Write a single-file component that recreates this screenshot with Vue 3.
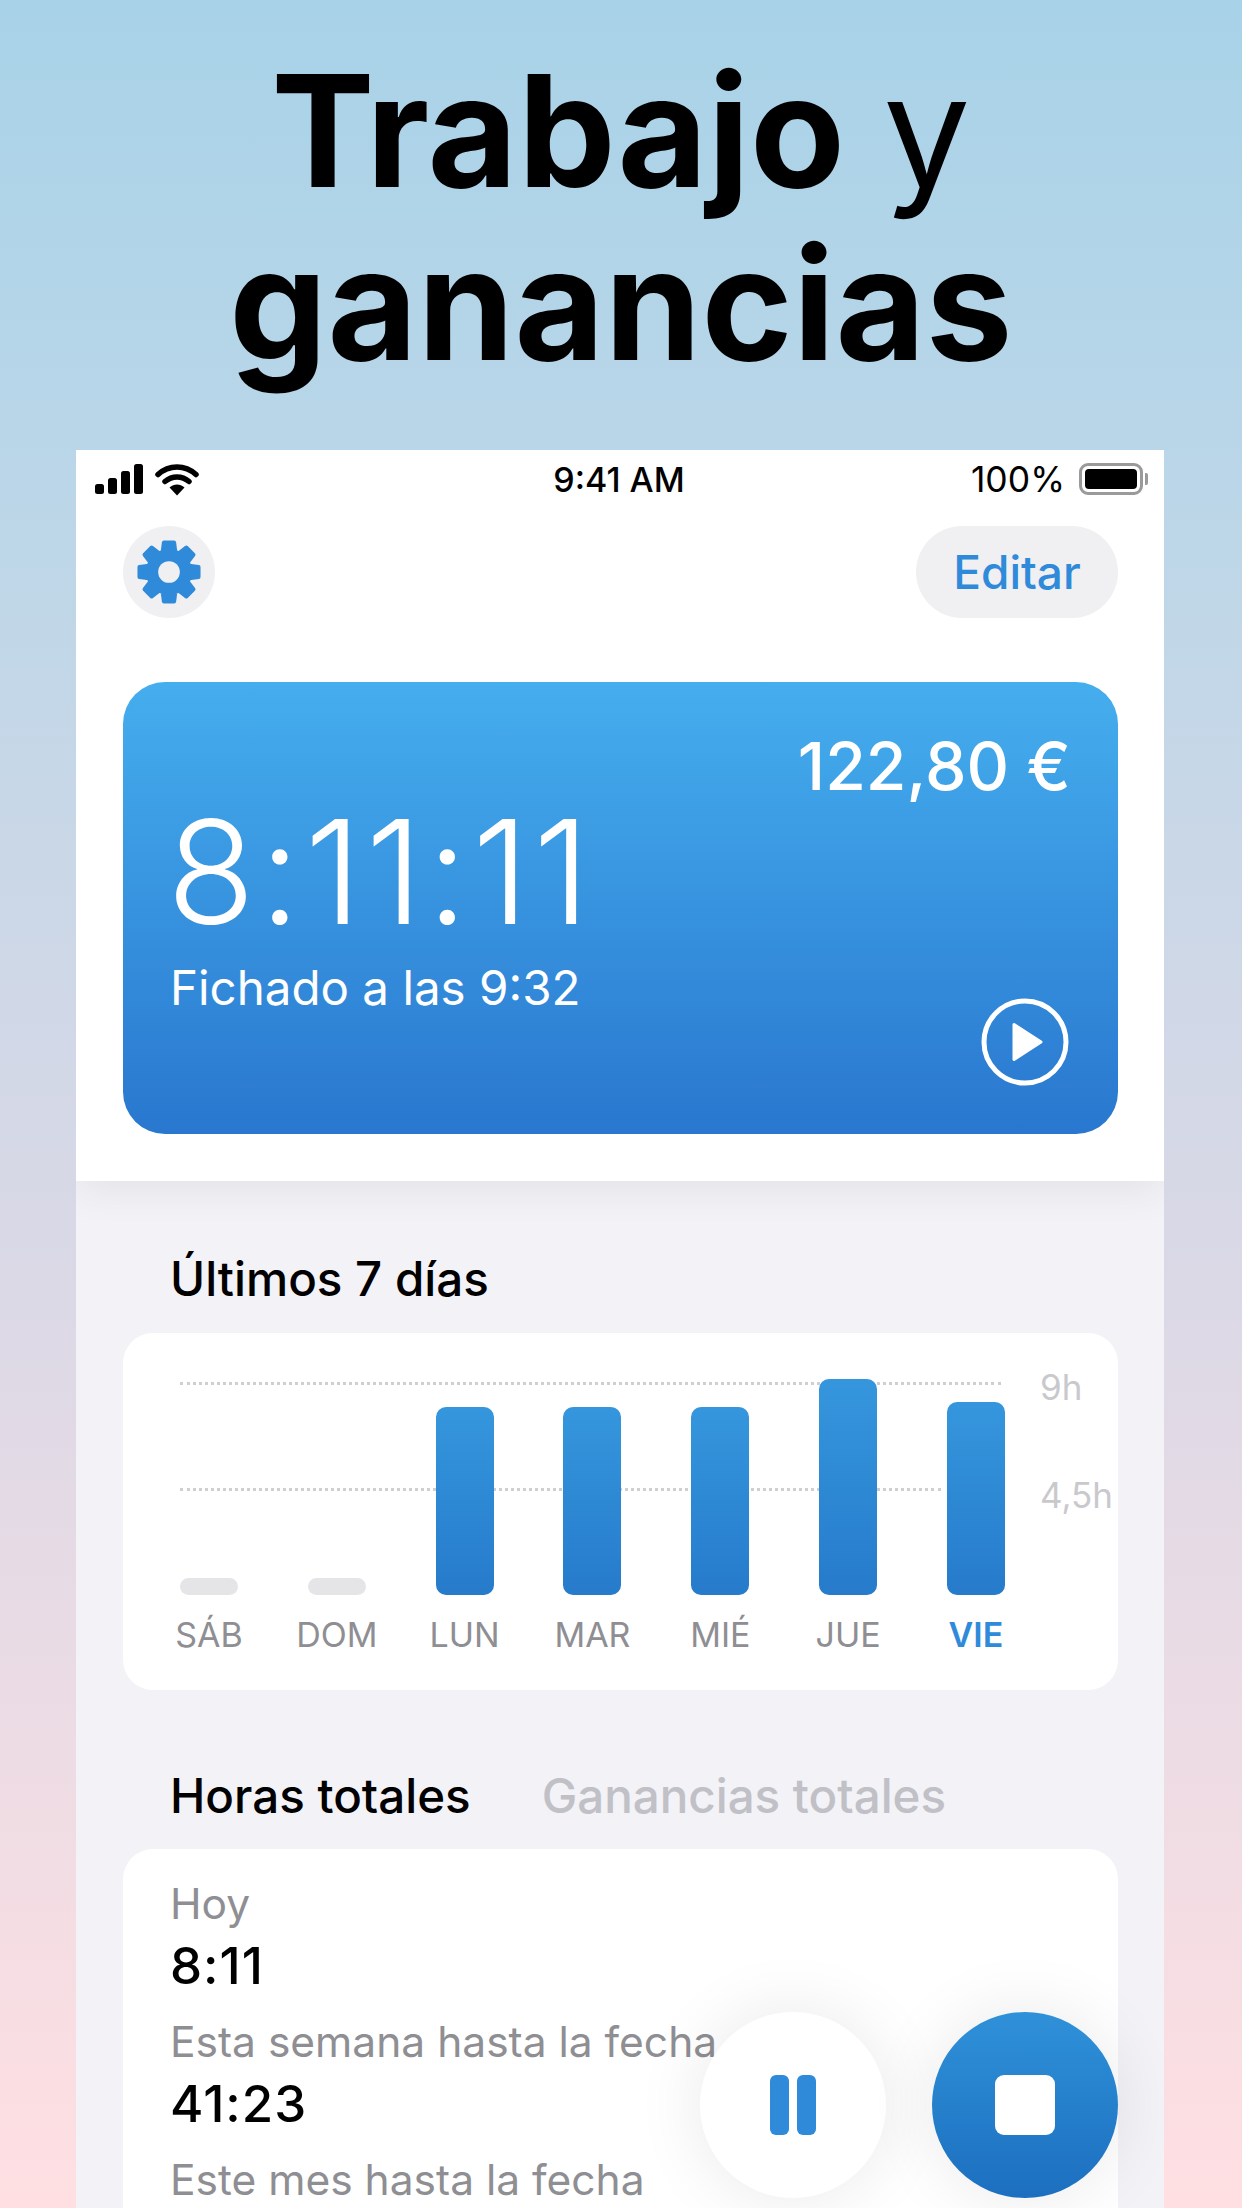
<template>
  <div class="page">
    <h1 class="title"><b>Trabajo</b> y<br /><b>ganancias</b></h1>

    <div class="phone">
      <header class="top">
        <div class="status">
          <div class="status-left">
            <svg width="48" height="30" viewBox="0 0 48 30" aria-hidden="true">
              <rect x="0" y="20" width="9" height="10" rx="2.5" />
              <rect x="13" y="14" width="9" height="16" rx="2.5" />
              <rect x="26" y="7" width="9" height="23" rx="2.5" />
              <rect x="39" y="0" width="9" height="30" rx="2.5" />
            </svg>
            <svg width="44" height="33" viewBox="0 0 44 33" aria-hidden="true">
              <path d="M3 11.5C14 1.5 30 1.5 41 11.5" class="wifi-arc" />
              <path d="M10 18.5C17 12.5 27 12.5 34 18.5" class="wifi-arc" />
              <path d="M14.5 24.5C19 20.5 25 20.5 29.500 24.500L22 32.500Z" class="wifi-tip" />
            </svg>
          </div>
          <span class="clock">9:41 AM</span>
          <div class="status-right">
            <span>100%</span>
            <div class="battery"><i></i></div>
          </div>
        </div>

        <div class="toolbar">
          <button class="gear-btn" aria-label="Ajustes">
            <svg width="66" height="66" viewBox="-32 -32 64 64" aria-hidden="true">
              <path :d="gearPath" fill="#2f8bda" stroke="#2f8bda" stroke-width="4" stroke-linejoin="round" fill-rule="evenodd" />
              <circle r="10.500" fill="#f0f0f3" />
            </svg>
          </button>
          <button class="edit-btn">Editar</button>
        </div>

        <section class="hero">
          <div class="amount">122,80 €</div>
          <div class="timer">8:11:11</div>
          <div class="clocked">Fichado a las 9:32</div>
          <svg class="play" width="88" height="88" viewBox="0 0 88 88" aria-hidden="true">
            <circle cx="44" cy="44" r="41" fill="none" stroke="#fff" stroke-width="5" />
            <path d="M33 26.500L60 44L33 61.500Z" fill="#fff" stroke="#fff" stroke-width="3" stroke-linejoin="round" />
          </svg>
        </section>
      </header>

      <main class="content">
        <h2 class="heading">Últimos 7 días</h2>
        <section class="card chart">
          <div class="grid-line grid-line--top"></div>
          <div class="grid-line grid-line--mid"></div>
          <span class="axis axis--top">9h</span>
          <span class="axis axis--mid">4,5h</span>
          <div class="days">
            <div v-for="d in days" :key="d.name" class="day">
              <div class="bar-slot">
                <div class="bar" :class="{ 'bar--empty': d.h < 20 }" :style="{ height: d.h + 'px' }"></div>
              </div>
              <span class="day-name" :class="{ 'day-name--now': d.now }">{{ d.name }}</span>
            </div>
          </div>
        </section>

        <div class="tabs">
          <span class="tab tab--on">Horas totales</span>
          <span class="tab">Ganancias totales</span>
        </div>
        <section class="card totals">
          <div v-for="t in totals" :key="t.label" class="total">
            <div class="total-label">{{ t.label }}</div>
            <div v-if="t.value" class="total-value">{{ t.value }}</div>
          </div>
        </section>
      </main>

      <div class="fabs">
        <button class="fab fab--pause" aria-label="Pausa"><i></i><i></i></button>
        <button class="fab fab--stop" aria-label="Parar"><i></i></button>
      </div>
    </div>
  </div>
</template>

<script setup>
const days = [
  { name: 'SÁB', h: 17 },
  { name: 'DOM', h: 17 },
  { name: 'LUN', h: 188 },
  { name: 'MAR', h: 188 },
  { name: 'MIÉ', h: 188 },
  { name: 'JUE', h: 216 },
  { name: 'VIE', h: 193, now: true },
]

const totals = [
  { label: 'Hoy', value: '8:11' },
  { label: 'Esta semana hasta la fecha', value: '41:23' },
  { label: 'Este mes hasta la fecha' },
]

// rueda dentada de 8 dientes
const pt = (r, a) => `${(r * Math.cos(a)).toFixed(2)} ${(r * Math.sin(a)).toFixed(2)}`
const gearPath = (() => {
  let d = ''
  for (let i = 0; i < 8; i++) {
    const c = (i * Math.PI) / 4 - Math.PI / 2
    d += `${i ? 'L' : 'M'}${pt(20.5, c - 0.3)}L${pt(29, c - 0.17)}L${pt(29, c + 0.17)}L${pt(20.5, c + 0.3)}`
  }
  return d + 'Z'
})()
</script>

<style>
html, body { margin: 0; }
</style>

<style scoped>
.page {
  width: 1242px;
  height: 2208px;
  overflow: hidden;
  display: flex;
  flex-direction: column;
  background: linear-gradient(180deg, #a8d2e8 0%, #b9d6e8 20%, #d8d8e6 55%, #ffdfe2 100%);
  font-family: Inter, "Noto Sans", sans-serif;
}
.title {
  height: 450px;
  margin: 0;
  padding-top: 44px;
  box-sizing: border-box;
  text-align: center;
  font-size: 155px;
  line-height: 173px;
  font-weight: 400;
  color: #000;
  letter-spacing: 0.3px;
  word-spacing: -6px;
}
.title b { font-weight: 700; }

.phone {
  position: relative;
  width: 1088px;
  margin-left: 76px;
  flex: 1;
  overflow: hidden;
  background: #f2f2f7;
}
.top {
  position: relative;
  background: #fff;
  height: 731px;
  padding: 0 46px 0 47px;
  box-sizing: border-box;
  box-shadow: 0 8px 40px rgba(0, 0, 0, 0.07);
}
.status {
  height: 58px;
  margin: 0 -25px 18px -28px;
  display: flex;
  align-items: center;
  justify-content: space-between;
  font-size: 35.5px;
  color: #000;
  position: relative;
}
.status-left { display: flex; align-items: center; gap: 12px; width: 200px; }
.wifi-arc { fill: none; stroke: #000; stroke-width: 5.5; stroke-linecap: round; }
.wifi-tip { fill: #000; }
.clock { font-weight: 500; font-size: 34px; }
.status-right { display: flex; align-items: center; justify-content: flex-end; gap: 14px; width: 200px; }
.battery {
  position: relative;
  width: 64px;
  height: 32px;
  box-sizing: border-box;
  border: 3px solid #9a9a9a;
  border-radius: 9px;
  padding: 3px;
}
.battery i { display: block; height: 100%; background: #000; border-radius: 4px; }
.battery::after {
  content: '';
  position: absolute;
  right: -8px;
  top: 7px;
  width: 3px;
  height: 12px;
  background: #9a9a9a;
  border-radius: 0 2px 2px 0;
}
.toolbar {
  display: flex;
  justify-content: space-between;
  margin-bottom: 64px;
}
button { border: 0; padding: 0; font-family: inherit; }
.gear-btn {
  width: 92px;
  height: 92px;
  border-radius: 50%;
  background: #f0f0f3;
  display: flex;
  align-items: center;
  justify-content: center;
}
.edit-btn {
  width: 202px;
  height: 92px;
  border-radius: 46px;
  background: #f0f0f3;
  color: #2f8bda;
  font-size: 46px;
  font-weight: 450;
}
.hero {
  position: relative;
  height: 452px;
  border-radius: 42px;
  background: linear-gradient(180deg, #45aeee 0%, #2977cf 100%);
  color: #fff;
  padding: 0 47px 0 47px;
  box-sizing: border-box;
  display: flex;
  flex-direction: column;
}
.amount {
  align-self: flex-end;
  margin-top: 47px;
  font-size: 66px;
  line-height: 75px;
  font-weight: 500;
}
.timer {
  margin: -19px 0 0 -3px;
  font-size: 144px;
  line-height: 174px;
  font-weight: 320;
  letter-spacing: 4.5px;
}
.clocked {
  font-size: 47.5px;
  line-height: 56px;
  margin-top: 1px;
}
.play { position: absolute; right: 49px; bottom: 48px; }

.content { padding: 0 46px 0 47px; }
.heading {
  margin: 71px 0 0 47px;
  font-size: 47.5px;
  line-height: 54px;
  font-weight: 500;
  color: #000;
}
.card { background: #fff; border-radius: 30px; }
.chart {
  position: relative;
  margin-top: 27px;
  height: 357px;
  box-sizing: border-box;
  padding: 46px 113px 0 57px;
}
.grid-line {
  position: absolute;
  left: 57px;
  border-top: 3px dotted #cfcfd2;
}
.grid-line--top { top: 49px; width: 821px; }
.grid-line--mid { top: 155px; width: 761px; }
.axis {
  position: absolute;
  left: 917px;
  font-size: 35px;
  line-height: 40px;
  color: #c9c9cd;
}
.axis--top { top: 34px; }
.axis--mid { top: 142px; }
.days { position: relative; display: flex; justify-content: space-between; }
.day { width: 58px; display: flex; flex-direction: column; align-items: center; }
.bar-slot { height: 216px; display: flex; align-items: flex-end; }
.bar {
  width: 58px;
  border-radius: 10px;
  background: linear-gradient(180deg, #3596dd 0%, #267bcb 100%);
}
.bar--empty { background: #e5e5e7; }
.day-name {
  margin-top: 20px;
  font-size: 34px;
  line-height: 39px;
  color: #8e8e93;
  white-space: nowrap;
}
.day-name--now { color: #2f8bda; font-weight: 600; }

.tabs {
  display: flex;
  gap: 71px;
  margin: 79px 0 0 47px;
}
.tab {
  font-size: 47.5px;
  line-height: 54px;
  font-weight: 500;
  color: #c0c0c6;
}
.tab--on { color: #000; }
.totals {
  margin-top: 26px;
  padding: 30px 47px 0;
  height: 500px;
  box-sizing: border-box;
}
.total-label {
  font-size: 42.5px;
  line-height: 50px;
  color: #8e8e93;
  white-space: nowrap;
}
.total-value {
  font-size: 51px;
  line-height: 60px;
  margin: 7px 0 21px;
  font-weight: 450;
  letter-spacing: 1px;
  color: #000;
}

.fabs {
  position: absolute;
  right: 46px;
  top: 1562px;
  display: flex;
  gap: 46px;
}
.fab {
  width: 186px;
  height: 186px;
  border-radius: 50%;
  display: flex;
  align-items: center;
  justify-content: center;
  box-shadow: 0 0 70px rgba(0, 0, 0, 0.09);
}
.fab--pause { background: #fff; gap: 8px; }
.fab--pause i { width: 19px; height: 60px; border-radius: 6px; background: #2f8bda; }
.fab--stop { background: linear-gradient(180deg, #2f91d9 0%, #1c6fbf 100%); }
.fab--stop i { width: 60px; height: 60px; border-radius: 9px; background: #fff; }
</style>
